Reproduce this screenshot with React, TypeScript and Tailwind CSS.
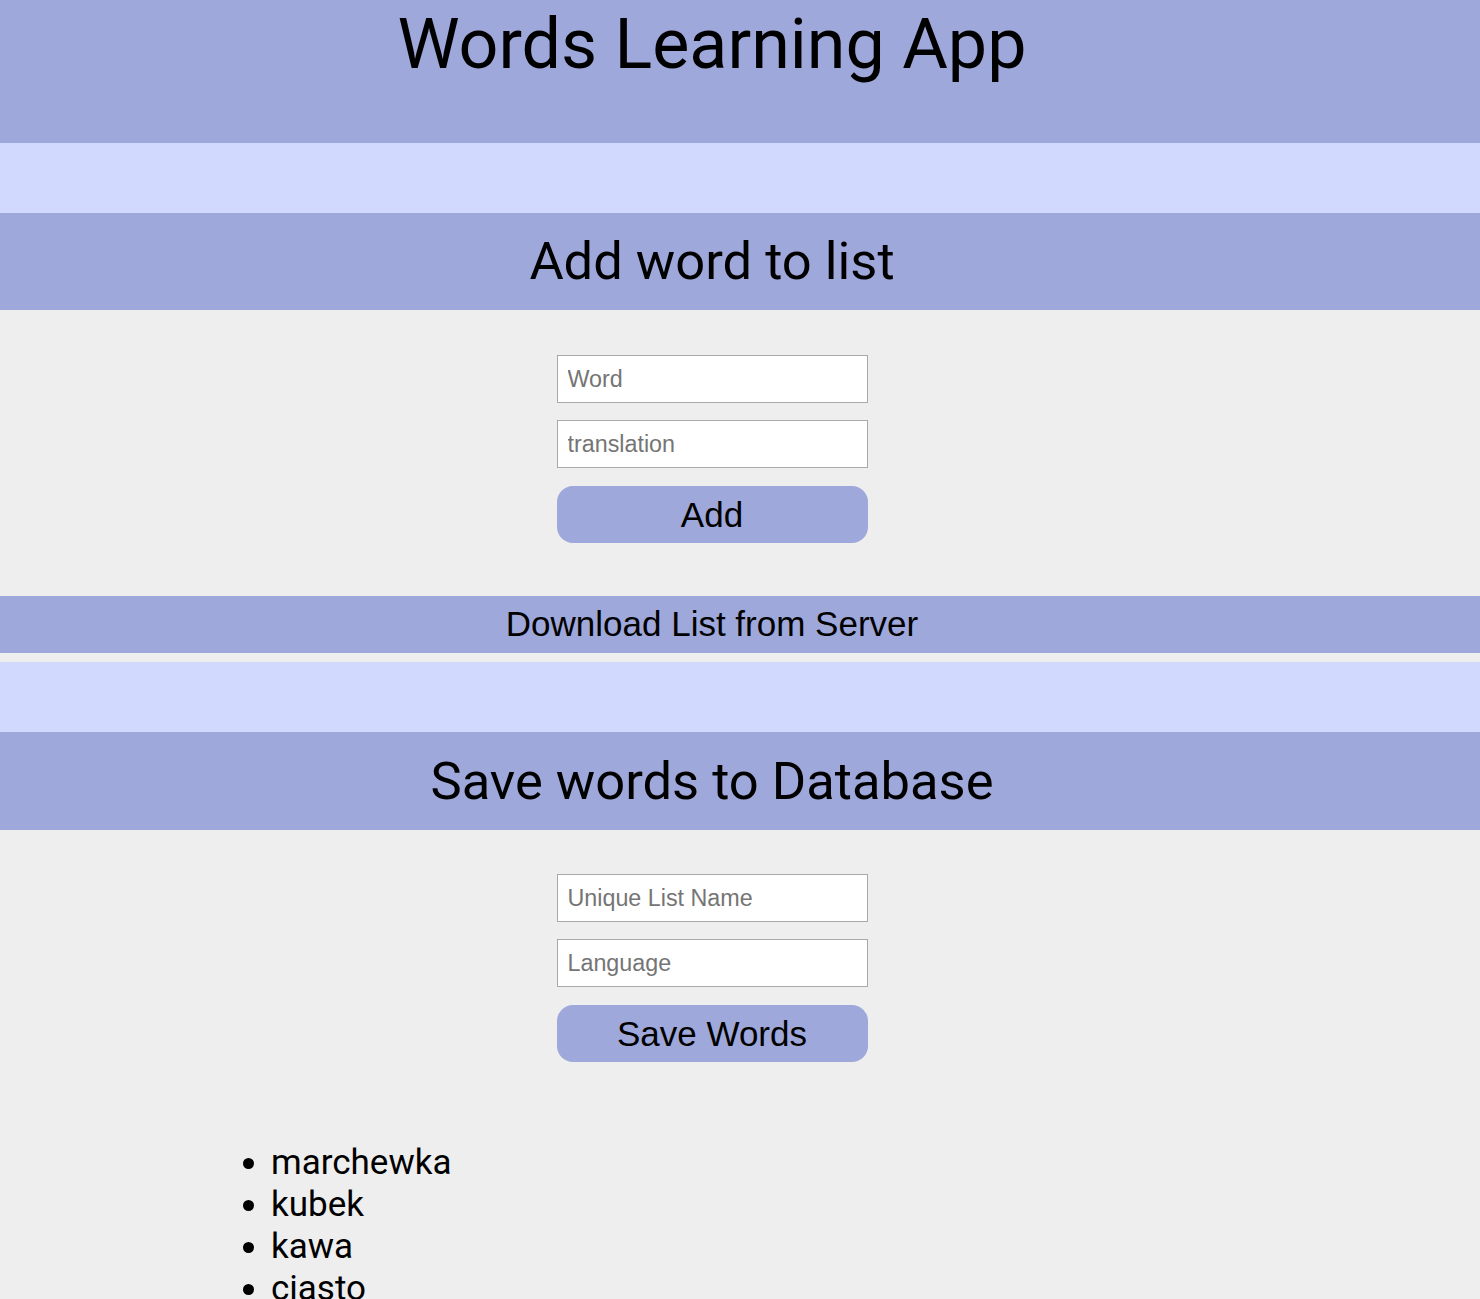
import React from "react";

const roboto = { fontFamily: "Roboto, sans-serif" };

function Field({ ph }: { ph: string }) {
  return (
    <input
      placeholder={ph}
      className="w-[311px] h-[48px] border border-[#a9a9a9] bg-white pl-[10px] text-[23.3px] text-black placeholder:text-[#757575] outline-none font-['Liberation_Sans',Arial,sans-serif]"
    />
  );
}

function Btn({ label }: { label: string }) {
  return (
    <button className="w-[311px] h-[57px] rounded-[16px] bg-[#9fa8da] text-[35px] text-black font-['Liberation_Sans',Arial,sans-serif] leading-none">
      {label}
    </button>
  );
}

export default function App() {
  return (
    <div className="min-h-[1299px] bg-[#eeeeee] font-['Roboto',sans-serif]">
      <header className="h-[143px] bg-[#9fa8da] pr-[56px] text-center">
        <h1 className="text-[70px] leading-[88px] text-black" style={roboto}>Words Learning App</h1>
      </header>
      <div className="h-[70px] bg-[#d1d9ff]" />
      <div className="h-[97px] bg-[#9fa8da] pr-[56px] flex items-center justify-center">
        <h2 className="text-[52.5px] text-black leading-none" style={roboto}>Add word to list</h2>
      </div>
      <div className="flex flex-col items-center gap-[17px] pr-[56px] pt-[45px]">
        <Field ph="Word" />
        <Field ph="translation" />
        <div className="pt-[1px]"><Btn label="Add" /></div>
      </div>
      <div className="mt-[53px] h-[57px] bg-[#9fa8da] pr-[56px] flex items-center justify-center">
        <span className="text-[35px] text-black font-['Liberation_Sans',Arial,sans-serif]">Download List from Server</span>
      </div>
      <div className="mt-[9px] h-[70px] bg-[#d1d9ff]" />
      <div className="h-[98px] bg-[#9fa8da] pr-[56px] flex items-center justify-center">
        <h2 className="text-[52.5px] text-black leading-none" style={roboto}>Save words to Database</h2>
      </div>
      <div className="flex flex-col items-center gap-[17px] pr-[56px] pt-[44px]">
        <Field ph="Unique List Name" />
        <Field ph="Language" />
        <div className="pt-[1px]"><Btn label="Save Words" /></div>
      </div>
      <ul className="list-disc ml-[231px] pl-[40px] mt-[80px] text-[35px] leading-[42px] text-black" style={roboto}>
        <li>marchewka</li>
        <li>kubek</li>
        <li>kawa</li>
        <li>ciasto</li>
      </ul>
    </div>
  );
}
